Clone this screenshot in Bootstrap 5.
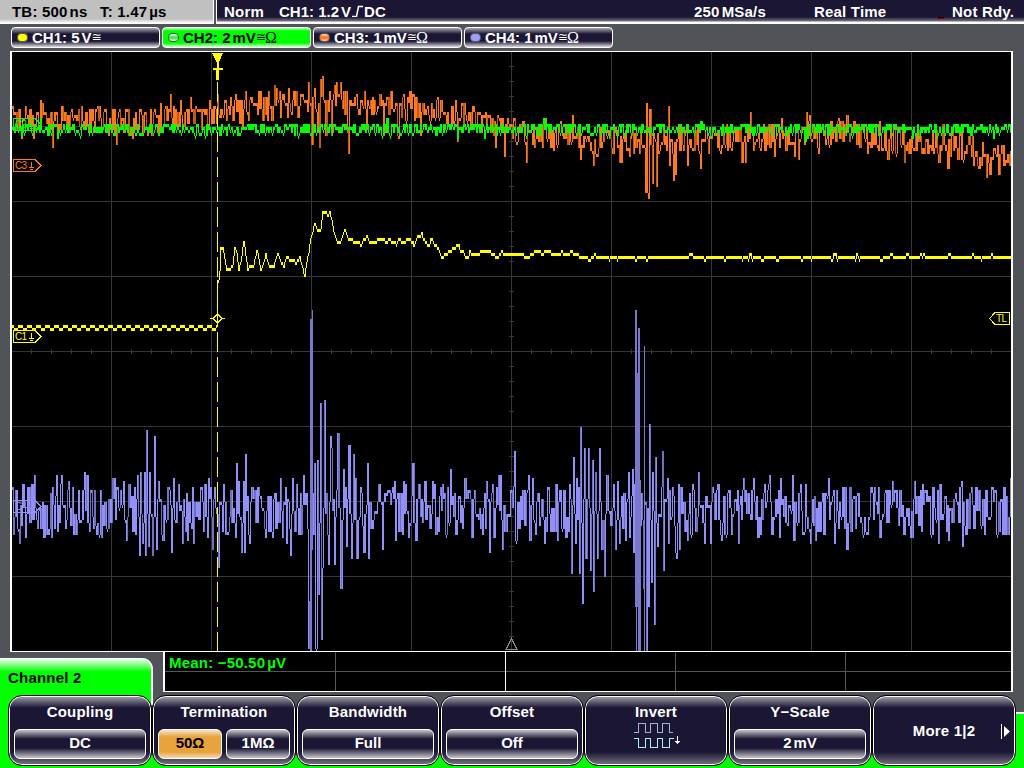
<!DOCTYPE html>
<html lang="en">
<head>
  <meta charset="UTF-8">
  <meta name="viewport" content="width=device-width, initial-scale=1">
  <title>Oscilloscope</title>
  <link href="https://cdn.jsdelivr.net/npm/bootstrap@5.3.3/dist/css/bootstrap.min.css" rel="stylesheet">
  <style>
    body {
      width: 1024px;
      height: 768px;
      background: #505458;
      color: #fff;
      font: bold 15px/18px "Liberation Sans", sans-serif;
      letter-spacing: .2px;
    }
    .status { height: 24px; }
    .status-time {
      width: 214px;
      padding-top: 3px;
      color: #000;
      background: linear-gradient(#c0c0c0 19px, #fff 23px);
      border-right: 1px solid #fff;
    }
    .status-main {
      margin-left: 2px;
      padding-top: 3px;
      border-left: 1px solid #fff;
      background: linear-gradient(#1a1633 17px, #74717f 21px, #fff 22px);
    }
    .time-base { width: 88px; }
    .thin { margin-left: 2px; }
    #mode { width: 55px; margin-left: 7px; }
    #trigger { width: 415px; letter-spacing: 0; }
    #rate { width: 120px; }
    #acq { width: 123px; }
    #ready { margin-left: 7px; }
    .channels { height: 27px; padding: 3px 0 3px 11px; gap: 2px; letter-spacing: 0; }
    .channel {
      width: 149px;
      padding-left: 5px;
      border: 1px solid #fff;
      border-radius: 4px;
      background: linear-gradient(#a9a8b1, #1a1633 6px, #1a1633 13px, #dad9df 19px);
    }
    .channel.active {
      color: #000;
      background: linear-gradient(#b8ffb8, #0f0 3px, #0f0 15px, #d4ffd4 19px);
    }
    .led { width: 11px; height: 9px; margin-right: 4px; border: 1px solid #555; border-radius: 4px; }
    .led-1 { background: #ff0; }
    .led-2 { background: linear-gradient(#e0ffe0, #3dde3d, #d0ffd0); }
    .led-3 { background: linear-gradient(#ffd8b8, #ff6d10, #ffc8a0); }
    .led-4 { background: #9d9dff; }
    .approx { font: 12px/17px "DejaVu Sans", sans-serif; letter-spacing: -1px; }
    .omega { font: 16px/18px "Liberation Serif", serif; }
    .screen {
      width: 1003px;
      height: 601px;
      margin-left: 10px;
      background: #000;
      border: solid #fff;
      border-width: 1px 2px;
    }
    .tag-text { font: 10px "Liberation Sans", sans-serif; letter-spacing: 0; }
    .bottom { height: 40px; }
    .tab-title {
      width: 153px;
      height: 42px;
      margin-top: 6px;
      padding: 11px 0 0 8px;
      color: #000;
      border-right: 2px solid #fff;
      border-radius: 0 11px 0 0;
      background: linear-gradient(#fff, #0f0 14px);
    }
    .measure {
      width: 850px;
      margin-left: 10px;
      color: #0f0;
      border: solid #fff;
      border-width: 0 2px 1px 2px;
      background: #000;
    }
    .measure > div { width: 170px; flex: none; border-right: 1px solid #555; }
    .measure > div:nth-child(1) { width: 171px; }
    .measure > div:nth-child(2) { border-right-color: #fff; }
    .measure > div:last-child { flex: 1; border-right: 0; }
    .measure-value { height: 20px; padding: 2px 0 0 4px; border-bottom: 1px solid #555; }
    .softkeys {
      height: 76px;
      padding: 3px 0 0 8px;
      background:
        linear-gradient(#0f0, #0f0) 0 0 / 151px 100% no-repeat,
        linear-gradient(#fff, #fff) 151px 0 / 2px 13px no-repeat,
        linear-gradient(#fff 2px, #0f0 2px) 1015px 20px / 9px 100% no-repeat,
        linear-gradient(#0f0, #0f0) 0 63px / 100% 13px no-repeat;
    }
    .softkey {
      width: 144px;
      height: 71px;
      padding: 7px 5px 6px;
      border: 1px solid #000;
      border-radius: 14px;
      box-shadow: inset 0 0 0 1px #fff;
      background: linear-gradient(#a4a3ad, #1a1633 12px, #1a1633 56px, #777582 69px);
    }
    .value {
      height: 30px;
      padding-bottom: 2px;
      border: 1px solid #fff;
      border-radius: 6px;
      letter-spacing: 0;
      background: linear-gradient(#c5c4cb, #1a1633 9px, #1a1633 18px, #c5c4cb 28px);
    }
    .value.chosen {
      color: #000;
      background: linear-gradient(#f8e4c5, #e8a33d 7px, #e8a33d 22px, #f5dab0 28px);
    }
    .invert-icon { margin-top: 1px; }
  </style>
</head>
<body class="overflow-hidden d-flex flex-column">

<header class="status d-flex flex-shrink-0 text-nowrap">
  <div class="status-time d-flex">
    <div class="ps-2 ms-1 time-base">TB: 500<span class="thin">ns</span></div>
    <div class="ms-2">T: 1.47<span class="thin">µs</span></div>
  </div>
  <div class="status-main d-flex flex-fill">
    <div id="mode">Norm</div>
    <div id="trigger">CH1: 1.2<span class="thin">V</span><svg width="13" height="12" class="align-baseline"><path d="M1 11.500H5.500L7.500 1.500H12" fill="none" stroke="#fff" stroke-width="1.500"/></svg>DC</div>
    <div id="rate">250<span class="thin">MSa/s</span></div>
    <div id="acq">Real Time</div>
    <svg id="lamp" width="8" height="18"><path d="M0 14h8v2H0z" fill="#900"/><path d="M1 14h6v1H1z" fill="#000"/></svg>
    <div id="ready">Not Rdy.</div>
  </div>
</header>

<nav class="channels d-flex flex-shrink-0 text-nowrap">
  <div class="channel d-flex align-items-center"><span class="led led-1"></span>CH1: 5<span class="thin">V</span><span class="approx">≅</span></div>
  <div class="channel active d-flex align-items-center"><span class="led led-2"></span>CH2: 2<span class="thin">mV</span><span class="approx">≅</span><span class="omega">Ω</span></div>
  <div class="channel d-flex align-items-center"><span class="led led-3"></span>CH3: 1<span class="thin">mV</span><span class="approx">≅</span><span class="omega">Ω</span></div>
  <div class="channel d-flex align-items-center"><span class="led led-4"></span>CH4: 1<span class="thin">mV</span><span class="approx">≅</span><span class="omega">Ω</span></div>
</nav>

<main class="screen flex-shrink-0">
  <svg id="plot" class="d-block" width="999" height="599" viewBox="12 52 999 599" fill="none" shape-rendering="crispEdges">
    <path id="grid" stroke="#373737"/>
    <path d="M511.500 638.500L506 649.500H517Z" stroke="#888"/>
    <g id="traces"></g>
    <path d="M217.500 82V651" stroke="#ff0" stroke-dasharray="20 5"/>
    <path d="M212 53H223L218.500 63V68H222.500V70H219V80H216V70H212.500V68H217V63Z" fill="#ff0"/>
    <path d="M210 318.500H213L217.500 314L222 318.500L217.500 323L213 318.500M222 318.500H225" stroke="#ff0"/>
    <g stroke="#ff7820"><path d="M13.500 159.500H35L41 165.500L35 171.500H13.500ZM31.500 162V167M29 167.500H34M30 169.500H33"/><text class="tag-text" x="15" y="169" fill="#ff7820" stroke="none" textLength="12">C3</text></g>
    <g stroke="#ff0"><path d="M13.500 330.500H35L41 336.500L35 342.500H13.500ZM31.500 333V338M29 338.500H34M30 340.500H33"/><text class="tag-text" x="15" y="340" fill="#ff0" stroke="none" textLength="12">C1</text></g>
    <g stroke="#0f0"><path d="M13.500 118.500H35L41 124.500L35 130.500H13.500ZM31.500 121V126M29 126.500H34M30 128.500H33"/><text class="tag-text" x="15" y="128" fill="#0f0" stroke="none" textLength="12">C2</text></g>
    <g stroke="#9090f8"><path d="M13.500 500.500H35L41 506.500L35 512.500H13.500ZM31.500 503V508M29 508.500H34M30 510.500H33"/><text class="tag-text" x="15" y="510" fill="#9090f8" stroke="none" textLength="12">C4</text></g>
    <path d="M1009.500 312.500H995L989.500 318.500L995 324.500H1009.500Z" stroke="#ff0" fill="#000"/>
    <text class="tag-text" x="996" y="322" fill="#ff0" textLength="11">TL</text>
  </svg>
</main>

<section class="bottom d-flex flex-shrink-0 text-nowrap">
  <div class="tab-title">Channel 2</div>
  <div class="measure d-flex">
    <div><div class="measure-value">Mean: −50.50<span class="thin">µV</span></div></div>
    <div><div class="measure-value"></div></div>
    <div><div class="measure-value"></div></div>
    <div><div class="measure-value"></div></div>
    <div><div class="measure-value"></div></div>
  </div>
</section>

<footer class="softkeys d-flex flex-shrink-0 text-center text-nowrap">
  <div class="softkey d-flex flex-column justify-content-between"><div>Coupling</div><div class="value d-flex align-items-center justify-content-center">DC</div></div>
  <div class="softkey d-flex flex-column justify-content-between">
    <div>Termination</div>
    <div class="d-flex gap-1">
      <div class="value chosen flex-fill d-flex align-items-center justify-content-center w-50">50Ω</div>
      <div class="value flex-fill d-flex align-items-center justify-content-center w-50">1MΩ</div>
    </div>
  </div>
  <div class="softkey d-flex flex-column justify-content-between"><div>Bandwidth</div><div class="value d-flex align-items-center justify-content-center">Full</div></div>
  <div class="softkey d-flex flex-column justify-content-between"><div>Offset</div><div class="value d-flex align-items-center justify-content-center">Off</div></div>
  <div class="softkey">
    <div>Invert</div>
    <svg class="invert-icon d-block mx-auto" width="50" height="28" fill="none" shape-rendering="crispEdges">
      <path d="M3 10.500H7.500V1.500H14.500V10.500H19.500V1.500H26.500V10.500H31.500V1.500H38.500V10.500H42" stroke="#9fb4dc"/>
      <path d="M3 16.500H7.500V25.500H14.500V16.500H19.500V25.500H26.500V16.500H31.500V25.500H38.500V16.500H43" stroke="#a8f0f4"/>
      <path d="M46.500 14V22M44 19.500H49M45 20.500H48" stroke="#fff"/>
    </svg>
  </div>
  <div class="softkey d-flex flex-column justify-content-between"><div>Y−Scale</div><div class="value d-flex align-items-center justify-content-center">2<span class="thin">mV</span></div></div>
  <div class="softkey d-flex align-items-center justify-content-center position-relative">
    More 1|2
    <svg class="position-absolute end-0 me-1" width="10" height="17"><path d="M.500 1V16" stroke="#fff"/><path d="M3 3L9 8.500L3 14Z" fill="#fff"/></svg>
  </div>
</footer>

<script>
  // graticule: 10 x 8 divisions with ticks on the two centre axes
  let grid = '';
  for (let x = 111; x < 1011; x += 100) grid += `M${x}.5 52V651`;
  for (let y = 126; y < 651; y += 75) grid += `M12 ${y}.5H1011`;
  for (let x = 31; x < 1011; x += 20) grid += `M${x}.5 349V354`;
  for (let y = 66; y < 651; y += 15) grid += `M509 ${y}.5H514`;
  document.getElementById('grid').setAttribute('d', grid);

  let seed = 7;
  function rnd() {
    seed = (seed * 16807) % 2147483647;
    return seed / 2147483647;
  }
  function level(points, x) {
    let i = 1;
    while (i < points.length - 1 && points[i][0] < x) i++;
    const [x0, y0] = points[i - 1], [x1, y1] = points[i];
    return y0 + (y1 - y0) * (x - x0) / (x1 - x0);
  }
  const pairs = s => s.trim().split(/\s+/).map(p => p.split(',').map(Number));
  const snap = v => Math.floor(v / 3) * 3 + 1;

  // one column per pixel, spanning from the previous sample to the current one;
  // a held sample mostly widens the column before it
  function draw(values, colour, shade, from, to, widen) {
    let light = '', dark = '', prev = values[from], a = 0, b = 0;
    for (let x = from; x <= to; x++) {
      const held = values[x] === undefined;
      const v = held ? prev : values[x];
      if (!held || rnd() > widen) {
        a = snap(Math.min(prev, v));
        b = Math.max(snap(Math.max(prev, v)), a + 3);
      }
      const d = `M${x}.5 ${a}V${b}`;
      if (b - a > 8 && rnd() < .25) dark += d; else light += d;
      prev = v;
    }
    document.getElementById('traces').insertAdjacentHTML('beforeend',
      `<path d="${light}" stroke="${colour}"/><path d="${dark}" stroke="${shade}"/>`);
  }
  function noisy(base, amp, peaks) {
    const v = [], fixed = {};
    let side = 1, x = 12;
    peaks.forEach(p => { fixed[p[0]] = p[1]; });
    while (x < 1011) {
      side = rnd() < .8 ? -side : side;
      v[x] = level(base, x) + side * amp * Math.pow(rnd(), .7);
      x += rnd() < .45 ? 1 : 2;
    }
    for (const k in fixed) {
      const n = +k;
      v[n] = fixed[n];
      if (fixed[n + 1] === undefined) v[n + 1] = level(base, n) + (rnd() - .5) * amp;
    }
    return v;
  }

  const blue = noisy([[12, 511], [1011, 511]], 26, pairs(`
    13,535 19,543 22,484 25,538 31,483 34,475 37,528 43,538 51,538 52,487 56,475 57,531 61,475 65,528 68,481 73,535
    78,490 84,472 86,475 91,490 96,535 101,538 112,478 114,478 120,490 123,481 126,541 128,484 135,535 137,475 139,555
    140,472 142,543 144,472 145,555 146,430 148,547 149,472 152,555 154,436 156,550 158,481 162,541 169,490 171,553
    173,478 178,484 182,544 187,540 192,487 193,544 201,487 204,484 207,538 208,478 212,550 214,487 218,568 223,484
    235,538 236,463 238,481 241,553 243,481 244,553 245,454 249,544 251,487 265,538 272,538 280,478 282,538 285,487
    286,544 290,556 292,478 301,534 303,475 308,649 309,600 314,463 315,648 316,649 317,460 318,595 320,403 321,640
    322,568 324,400 328,565 330,436 331,448 334,565 337,433 340,589 343,469 346,547 348,445 351,559 353,454 355,478 356,559
    363,552 367,463 368,559 378,484 382,550 389,490 392,487 394,481 395,541 403,481 405,484 408,538 412,463 415,541
    424,481 432,481 435,535 440,487 442,484 450,469 455,535 464,478 469,490 471,538 474,490 482,535 486,481 489,553
    492,484 493,538 496,487 498,475 500,475 502,550 514,451 515,541 516,541 520,496 528,475 529,541 532,478 535,535
    544,544 548,487 557,541 565,537 569,484 571,574 573,457 575,544 576,478 579,574 580,427 582,604 584,448 585,559
    588,448 590,571 592,460 593,592 595,472 597,559 599,448 601,550 604,577 606,475 613,484 615,550 617,481 619,544
    625,541 628,472 629,538 632,469 633,553 634,484 643,589 646,651 648,607 649,424 651,583 652,472 654,625 655,457 657,547
    661,487 662,451 663,571 667,478 668,544 669,490 675,553 676,559 678,484 679,550 680,487 687,541 692,484 693,490 698,472
    704,544 705,496 710,544 713,493 717,484 721,541 728,490 731,535 738,544 743,478 747,493 753,478 757,538 760,535 764,484
    769,475 771,535 778,490 780,478 779,538 792,475 793,541 800,484 805,484 810,544 815,541 828,478 833,490 834,544 836,490
    846,550 857,493 874,487 878,487 879,538 885,490 892,481 899,490 903,535 910,538 912,538 914,481 922,484 925,490 938,544 939,484
    948,541 955,493 961,481 962,547 965,535 971,487 975,487 985,490 992,487 997,535 1007,535 1010,478`));
  const orange = noisy(pairs(`12,120 110,122 150,122 200,116 300,104 340,102 400,108 450,112 480,122 520,133
    600,142 660,140 750,138 850,134 900,142 950,145 980,153 1011,158`), 14, pairs(`
    12,106 21,138 25,106 33,138 40,100 42,103 52,147 57,138 61,106 71,109 78,108 81,107 91,110 97,107 99,107 108,136
    116,144 119,109 132,139 140,109 151,136 155,115 160,103 165,105 170,94 180,99 183,127 190,97 196,110 209,100 217,94
    226,122 230,97 235,94 242,129 245,91 250,96 258,92 260,91 268,91 274,85 276,88 280,118 288,88 293,90 297,118 302,93
    308,82 311,145 314,88 317,134 319,147 320,79 322,76 325,137 329,91 331,137 334,84 336,82 340,82 347,130 348,153
    353,106 356,94 366,130 367,100 374,100 382,99 383,135 390,90 397,137 398,140 403,93 409,92 420,137 427,105 437,97
    446,125 455,99 457,141 464,103 472,106 482,115 487,116 495,147 504,157 510,123 517,141 526,163 534,147 545,118
    553,150 560,120 572,115 580,160 593,165 597,157 605,130 610,140 619,162 621,162 629,157 633,155 640,130 645,193
    646,103 647,193 648,198 649,109 652,184 654,140 656,186 659,152 663,127 668,106 669,165 673,181 675,174 681,133 687,165 700,168
    708,153 712,130 720,153 731,150 741,163 745,163 750,112 753,150 760,150 774,157 781,118 794,157 798,160 806,112
    809,116 818,154 826,140 838,118 846,115 850,133 867,154 879,121 887,160 904,162 911,137 921,153 938,162 942,125
    947,169 954,136 965,155 972,136 973,165 978,169 986,177 989,174 995,155 998,175 1005,160 1010,152`));
  const green = noisy([[12, 129.5], [1011, 129.5]], 6, pairs('40,119 57,138 386,119 457,138 484,138 543,118 700,121 804,141 912,138 993,138'));

  // CH1: flat dither, step at the trigger, ringing, then decay
  const shape = pairs(`218,280 219,270 220,246 222,246 224,258 226,271 228,268 232,266 234,248 236,252 238,271 240,262
    243,241 245,256 247,270 249,265 253,266 256,250 258,258 260,270 263,262 265,254 268,266 273,267 277,253 280,262
    283,267 286,256 289,261 292,258 295,264 299,256 301,266 304,277 306,262 308,252 310,238 312,231 314,223 316,228
    318,232 320,228 322,212 325,211 327,215 329,211 331,221 333,232 336,242 340,242 344,230 348,240 358,241 360,246
    362,240 366,236 369,242 376,240 388,238 393,243 398,239 403,242 408,238 413,243 418,235 423,238 427,247 431,241
    436,246 440,254 446,250 457,248 461,251 466,254 478,254 480,251 490,252 496,257 500,254 504,257 511,252 520,254
    527,257 535,251 550,252 553,254 572,252 582,257 1011,257`);
  const yellow = [];
  let hold = 0, blip = 0;
  for (let x = 12; x <= 1010; x++) {
    if (x < 217) yellow[x] = x % 9 < 4 ? 325.5 : 328.5;
    else if (x === 217) yellow[x] = 280;
    else {
      if (--hold < 0) {
        hold = rnd() * 7;
        blip = x > 345 && rnd() < .3 ? (rnd() < .35 ? -3 : 3) : 0;
        if (blip) hold = rnd() * 3;
      }
      yellow[x] = level(shape, x) + blip;
    }
  }
  yellow[141] = 331;

  draw(blue, '#9090f8', '#7070c0', 12, 1010, .75);
  // main bursts run off the bottom of the graticule
  document.getElementById('traces').insertAdjacentHTML('beforeend',
    `<path fill="#7b77cc" d="M310 319h2V651h-2zM312 310h1V550h-1zM635 310h2V607h-2zM637 373h1V607h-1zM638 328h2V651h-2zM636 600h1V651h-1zM640 480h1V651h-1zM644 346h1V651h-1z"/>`);
  draw(orange, '#ff7820', '#c05a14', 12, 1010, .6);
  draw(green, '#0f0', '#0f0', 12, 1010, .3);
  draw(yellow, '#ff0', '#ff0', 12, 1010, 0);
</script>

<script src="https://cdn.jsdelivr.net/npm/bootstrap@5.3.3/dist/js/bootstrap.bundle.min.js"></script>
</body>
</html>
